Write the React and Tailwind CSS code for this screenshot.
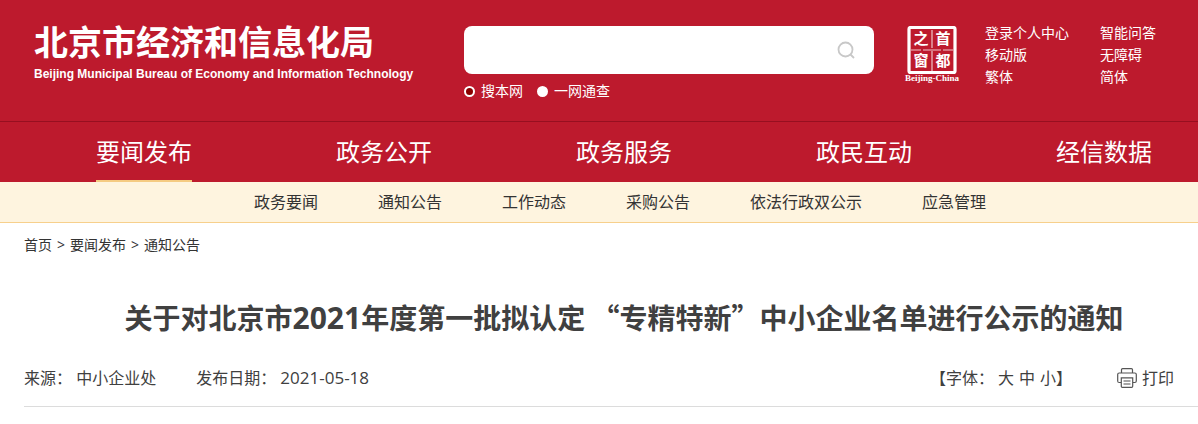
const mainNav = ["要闻发布", "政务公开", "政务服务", "政民互动", "经信数据"];
const subNav = ["政务要闻", "通知公告", "工作动态", "采购公告", "依法行政双公示", "应急管理"];
const quickLinks = ["登录个人中心", "智能问答", "移动版", "无障碍", "繁体", "简体"];

function CapitalWindowLogo() {
  return (
    <svg
      width="56"
      height="58"
      viewBox="0 0 56 58"
      role="img"
      aria-label="首都之窗"
      className="block shrink-0 fill-white stroke-none font-['Noto_Sans_CJK_SC','Liberation_Sans',sans-serif] font-bold"
    >
      <rect x="5" y="1.5" width="46" height="45" rx="1.5" fill="none" stroke="#fff" strokeWidth="3.2" />
      <path
        d="M28 4v18M28 25v20M7 24h10M19 24h18M39 24h10"
        stroke="#fff"
        strokeOpacity="0.75"
        strokeWidth="1.2"
      />
      <text x="17" y="18" fontSize="15" textAnchor="middle">之</text>
      <text x="39" y="18" fontSize="15" textAnchor="middle">首</text>
      <text x="17" y="40" fontSize="15" textAnchor="middle">窗</text>
      <text x="39" y="40" fontSize="15" textAnchor="middle">都</text>
      <text x="28" y="55" fontSize="9" textAnchor="middle" className="font-['Liberation_Serif',serif]">
        Beijing-China
      </text>
    </svg>
  );
}

function PrinterIcon() {
  return (
    <svg width="20" height="20" viewBox="0 0 20 20" fill="none" stroke="#555" strokeWidth="1.2" aria-hidden="true">
      <path d="M4.5 5V1.8Q4.5.7 5.6.7h8.8q1.1 0 1.1 1.1V5" />
      <path d="M4 14.5H2.2Q.7 14.5.7 13V6.5Q.7 5 2.2 5h15.6q1.5 0 1.5 1.5V13q0 1.5-1.5 1.5H16" />
      <path d="M4.3 9.8h11.4v8.4q0 1.1-1.1 1.1H5.4q-1.1 0-1.1-1.1z" />
      <path d="M6.5 13h7M6.5 16h7" stroke="#888" strokeWidth="1.6" />
    </svg>
  );
}

function ScopeOption({ label, defaultChecked }) {
  return (
    <label className="flex items-center gap-1.5">
      <input
        type="radio"
        name="scope"
        defaultChecked={defaultChecked}
        className="size-[11px] appearance-none rounded-full border-2 border-white bg-white checked:bg-[#8b0000]"
      />
      {label}
    </label>
  );
}

export default function App() {
  return (
    <div className="overflow-x-hidden bg-white font-['Open_Sans','Noto_Sans_CJK_SC',sans-serif] text-[#333]">
      <header className="bg-[#bd1a2d] text-white">
        <div className="flex items-start border-b border-[#970f20] pt-[26px] pr-[42px] pb-[19px]">
          <a href="#" className="block w-[464px] shrink-0 pl-[34px]">
            <span className="-mt-1 block text-[34px] leading-10 font-bold">北京市经济和信息化局</span>
            <span className="mt-1 block font-['Liberation_Sans',sans-serif] text-xs leading-4 font-bold whitespace-nowrap">
              Beijing Municipal Bureau of Economy and Information Technology
            </span>
          </a>
          <form className="flex-1">
            <div className="flex h-12 items-center rounded-lg bg-white pr-[19px]">
              <input type="text" aria-label="搜索" className="h-full min-w-0 flex-1 px-4 text-base text-[#333] outline-none" />
              <button type="button" aria-label="搜索">
                <svg width="18" height="18" viewBox="0 0 18 18" fill="none" stroke="#c8c8c8" strokeWidth="1.8" className="block">
                  <circle cx="8.5" cy="8.5" r="7" />
                  <path d="M13.5 13.5l3.5 3.5" />
                </svg>
              </button>
            </div>
            <div className="mt-1.5 flex gap-3.5 text-sm leading-[22px]">
              <ScopeOption label="搜本网" defaultChecked />
              <ScopeOption label="一网通查" />
            </div>
          </form>
          <div className="ml-[30px]">
            <CapitalWindowLogo />
          </div>
          <ul className="-mt-1 ml-[25px] grid grid-cols-[auto_auto] gap-x-[31px] text-sm leading-[22px]">
            {quickLinks.map((name) => (
              <li key={name}>
                <a href="#">{name}</a>
              </li>
            ))}
          </ul>
        </div>
        <nav className="flex justify-between pr-[46px] pl-24 text-2xl">
          {mainNav.map((name, i) => (
            <a
              key={name}
              href="#"
              className={
                i === 0
                  ? "block h-[60px] border-b-2 border-[#f5cb82] leading-[60px]"
                  : "block h-[60px] leading-[60px]"
              }
            >
              {name}
            </a>
          ))}
        </nav>
      </header>
      <nav className="flex gap-15 border-b border-[#f7d08c] bg-[#fef4df] pl-[254px] text-base leading-10">
        {subNav.map((name) => (
          <a key={name} href="#">{name}</a>
        ))}
      </nav>
      <main className="pl-6">
        <nav aria-label="面包屑" className="flex h-11 items-center gap-[5px] text-sm">
          <a href="#">首页</a>
          <span>&gt;</span>
          <a href="#">要闻发布</a>
          <span>&gt;</span>
          <a href="#">通知公告</a>
        </nav>
        <h1 className="mt-[30px] pl-[26px] text-center font-['Noto_Sans_CJK_SC',sans-serif] text-[28px] leading-10 font-bold whitespace-nowrap text-[#404040]">
          关于对北京市<span className="font-['Open_Sans',sans-serif] text-[30px]">2021</span>年度第一批拟认定 “专精特新”中小企业名单进行公示的通知
        </h1>
        <div className="mt-4 flex items-center border-b border-[#dcdcdc] pr-6 pb-1 text-base leading-[48px] text-[#404040]">
          <p>来源： 中小企业处</p>
          <p className="ml-10">
            发布日期： <time className="text-[17px]">2021-05-18</time>
          </p>
          <p className="ml-auto flex">
            【字体：
            <span className="ml-1 flex gap-[5px]">
              <button type="button">大</button>
              <button type="button">中</button>
              <button type="button">小</button>
            </span>
            】
          </p>
          <button type="button" className="ml-[45px] flex items-center gap-[5px]">
            <PrinterIcon />
            打印
          </button>
        </div>
      </main>
    </div>
  );
}
